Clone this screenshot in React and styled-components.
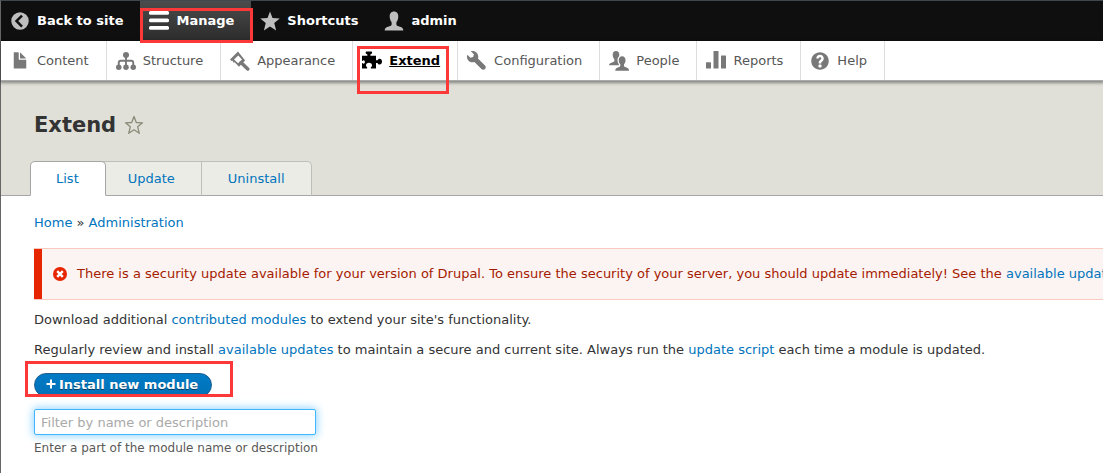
import React from 'react';
import styled, { createGlobalStyle, css } from 'styled-components';

const GlobalStyle = createGlobalStyle`
  * {
    box-sizing: border-box;
  }

  body {
    margin: 0;
    background: #fff;
    color: #333;
    font-family: 'DejaVu Sans', 'Lucida Grande', sans-serif;
    font-size: 13px;
    line-height: 20px;
    overflow: hidden;
  }
`;

const StyledPage = styled.div`
  min-height: 100vh;
  border-top: 1px solid #40474d;
  border-left: 1px solid #666;
`;

const StyledBar = styled.nav`
  display: flex;
  height: 40px;
  background: #0f0f0f;
`;

const StyledTray = styled.nav`
  position: relative;
  display: flex;
  height: 40px;
  background: #fff;
  border-bottom: 1px solid #aaa;
  box-shadow: 0 1px 3px 1px rgba(0, 0, 0, 0.4);
`;

const StyledItem = styled.div`
  position: relative;
  display: flex;
`;

const StyledTrayItem = styled(StyledItem)`
  border-right: 1px solid #ddd;
`;

const StyledBarLink = styled.a`
  display: flex;
  align-items: center;
  gap: 7px;
  padding: 0 17px 0 9px;
  color: #fff;
  font-weight: bold;
  text-decoration: none;
  white-space: nowrap;

  svg {
    color: ${({ $active }) => ($active ? '#fff' : '#bebebe')};
  }

  ${({ $active }) =>
    $active &&
    css`
      background: linear-gradient(#4c4c4c, #2b2b2b);
    `}
`;

const StyledTrayLink = styled.a`
  display: flex;
  align-items: center;
  gap: 7px;
  padding: 0 17px 0 9px;
  color: ${({ $active }) => ($active ? '#000' : '#565656')};
  font-weight: ${({ $active }) => ($active ? 'bold' : 'normal')};
  text-decoration: none;
  white-space: nowrap;

  svg {
    color: ${({ $active }) => ($active ? '#000' : '#787878')};
  }

  span {
    text-decoration: ${({ $active }) => ($active ? 'underline' : 'none')};
  }
`;

const StyledIcon = styled.svg`
  flex: none;
  width: 20px;
  height: 20px;
  fill: currentColor;
`;

const StyledMark = styled.div`
  position: absolute;
  z-index: 2;
  top: ${({ $top }) => $top}px;
  right: ${({ $right }) => $right}px;
  bottom: ${({ $bottom }) => $bottom}px;
  left: ${({ $left }) => $left}px;
  border: 3px solid #fd3838;
  pointer-events: none;
`;

const StyledHeader = styled.header`
  display: flex;
  flex-direction: column;
  padding: 28px 29px 0;
  background: #e0e0d8;
  border-bottom: 1px solid #a6a6a6;
`;

const StyledTitleRow = styled.div`
  display: flex;
  align-items: center;
  gap: 8px;
  padding: 0 4px;
`;

const StyledTitle = styled.h1`
  margin: 0;
  font-size: 21px;
  line-height: 32px;
`;

const StyledStarButton = styled.button`
  display: flex;
  padding: 0;
  border: 0;
  background: none;
  color: #8b8b78;
`;

const StyledTabs = styled.nav`
  display: flex;
  margin-top: 20px;
  margin-bottom: -1px;
`;

const StyledTab = styled.a`
  padding: 7px 26px 6px;
  border: 1px solid #bfbfba;
  border-left: 0;
  border-bottom-color: #a6a6a6;
  background: #ecece6;
  color: #0074bd;
  text-decoration: none;

  &:last-child {
    border-top-right-radius: 5px;
  }

  ${({ $active }) =>
    $active &&
    css`
      z-index: 1;
      margin-right: -4px;
      padding-left: 25px;
      border: 1px solid #a6a6a6;
      border-bottom-color: #fff;
      border-radius: 5px 5px 0 0;
      background: #fff;
    `}
`;

const StyledMain = styled.main`
  padding: 17px 0 0 33px;
`;

const StyledLink = styled.a`
  color: #0074bd;
  text-decoration: none;
`;

const StyledAlert = styled.div`
  display: flex;
  align-items: center;
  gap: 9px;
  height: 52px;
  margin-top: 15px;
  padding-left: 10px;
  border: solid #f9c9bf;
  border-width: 1px 0;
  background: #fcf4f2;
  box-shadow: inset 8px 0 #e62600;
  padding-left: 18px;
  color: #a51b00;
  white-space: nowrap;
  overflow: hidden;
`;

const StyledAlertIcon = styled.svg`
  flex: none;
  width: 16px;
  height: 16px;
`;

const StyledText = styled.p`
  margin: 10px 0 0;
`;

const StyledAction = styled.div`
  position: relative;
  width: fit-content;
  margin-top: 13px;
`;

const StyledInstall = styled.button`
  display: flex;
  align-items: center;
  gap: 3px;
  height: 24px;
  padding: 0 13px 2px 11px;
  border: 1px solid #1e5c90;
  border-radius: 20px;
  background: linear-gradient(#007bc6, #0071b8);
  color: #fff;
  font: bold 13px 'DejaVu Sans', sans-serif;
  text-shadow: 0 1px rgba(0, 0, 0, 0.5);
`;

const StyledPlus = styled.svg`
  width: 10px;
  height: 10px;
`;

const StyledField = styled.div`
  display: flex;
  flex-direction: column;
  align-items: flex-start;
  margin-top: 12px;
`;

const StyledInput = styled.input`
  width: 282px;
  max-width: 100%;
  height: 26px;
  padding: 0 6px;
  border: 1px solid #40b6ff;
  border-radius: 2px;
  outline: 0;
  background: #fff;
  box-shadow: 0 0 8px 1px #8fd3ff;
  color: #333;
  font: 13px 'DejaVu Sans', sans-serif;

  &::placeholder {
    color: #a9a9a9;
    opacity: 1;
  }
`;

const StyledHelp = styled.label`
  margin-top: 3px;
  color: #595959;
  font-size: 12px;
`;

const icons = {
  back: (
    <path
      fillRule="evenodd"
      d="M8 1a7 7 0 1 0 0 14A7 7 0 0 0 8 1zm2.3 3.3L6.6 8l3.7 3.7-1.4 1.4L3.8 8l5.1-5.1z"
    />
  ),
  menu: (
    <>
      <rect width="16" height="3" rx="1.2" />
      <rect y="6" width="16" height="3" rx="1.2" />
      <rect y="12" width="16" height="3" rx="1.2" />
    </>
  ),
  star: <path d="M8 .3l2 5.2 5.8.4-4.4 3.7 1.5 5.9L8 12.3l-4.9 3.2 1.5-5.9L.2 5.9 6 5.5z" />,
  user: (
    <path d="M4.6 5C4.3 2.1 5.8.4 8 .4s3.7 1.7 3.4 4.6c-.1 1.6-.7 3.1-1.5 4v1.6c0 1 .7 1.4 2.2 1.8 2 .5 3.2 1.2 3.4 3.1H.5c.2-1.9 1.4-2.6 3.4-3.1 1.5-.4 2.2-.8 2.2-1.8V9C5.3 8.1 4.7 6.6 4.6 5z" />
  ),
  file: (
    <path d="M12.502 7h-5c-.276 0-.502-.225-.502-.5v-5c0-.275-.225-.5-.5-.5h-3c-.275 0-.5.225-.5.5v12.029c0 .275.225.5.5.5h9.002c.275 0 .5-.225.5-.5v-6.029c0-.275-.225-.5-.5-.5zM8.502 6h4c.275 0 .34-.159.146-.354l-4.293-4.292c-.195-.195-.353-.129-.353.146v4c0 .275.225.5.5.5z" />
  ),
  structure: (
    <>
      <circle cx="8" cy="3.2" r="2.4" />
      <circle cx="2.2" cy="13" r="2.2" />
      <circle cx="8" cy="13" r="2.2" />
      <circle cx="13.8" cy="13" r="2.2" />
      <path
        d="M8 4v9M2.2 12.5V9.4Q2.2 7.8 3.8 7.8h8.4Q13.8 7.8 13.8 9.4v3.1"
        fill="none"
        stroke="currentColor"
        strokeWidth="1.5"
      />
    </>
  ),
  brush: (
    <>
      <path
        fillRule="evenodd"
        d="M6.4.3L0 6.7l1.2 1.2 1-.2.3 1.4 1.2-.2 3.5 3.6 4.9-4.9zM6.6 3.6l3 3.1-3.2 3.1-3.2-3.1z"
      />
      <path d="M9 9.4l5.2 5" fill="none" stroke="currentColor" strokeWidth="2.8" strokeLinecap="round" />
    </>
  ),
  puzzle: (
    <path d="M0 3.7h4.3V2.8C3.5 2.4 2.9 2 2.9 1.2c0-.6.4-.9 1-.9h3.2c.6 0 1 .3 1 .9 0 .8-.6 1.2-1.4 1.6v.9h4.5v3.7h1.2c.4-.8.9-1.3 1.7-1.3 1.1 0 1.9.9 1.9 2.3s-.8 2.4-1.9 2.4c-.8 0-1.3-.5-1.7-1.3h-1.2v4.4H7.1v-1c.6-.4.9-.9.9-1.6 0-1.1-.9-1.9-2.4-1.9s-2.4.8-2.4 1.9c0 .7.3 1.2.9 1.6v1H0V9.6h.4c.2.3.5.5.9.5.6 0 1-.6 1-1.3s-.4-1.4-1-1.4c-.4 0-.7.2-.9.5H0z" />
  ),
  wrench: (
    <path d="M14.416 11.586l-.01-.008v-.001l-5.656-5.656c.15-.449.252-.921.252-1.421 0-2.485-2.016-4.5-4.502-4.5-.505 0-.981.102-1.434.255l2.431 2.431-.588 2.196-2.196.588-2.445-2.445c-.162.464-.268.956-.268 1.475 0 2.486 2.014 4.5 4.5 4.5.5 0 .972-.102 1.421-.251l5.667 5.665c.781.781 2.047.781 2.828 0s.781-2.047 0-2.828z" />
  ),
  people: (
    <>
      <path d="M3 3.2C2.8 1.2 4 0 5.6 0s2.8 1.2 2.6 3.2c0 .4-.1.8-.2 1.1-.9.7-1.3 1.9-1.2 3.3.1 1.2.5 2.3 1.1 3l-.1.8H0c.1-1.3 1-2 2.4-2.3 1.5-.3 1.9-.5 1.9-1.3V6.600C3.5 5.8 3 4.5 3 3.2z" />
      <path d="M7.8 7.5C7.6 5.5 8.8 4.2 10.5 4.2s2.9 1.3 2.7 3.3c0 1.2-.5 2.4-1.2 3.1v1.2c0 .8.5 1 1.9 1.3 1.3.3 2.1 1 2.1 2.7H5c0-1.7.8-2.4 2.1-2.7 1.4-.3 1.9-.5 1.9-1.3v-1.2c-.7-.7-1.2-1.9-1.2-3.1z" />
    </>
  ),
  chart: (
    <>
      <rect y="9" width="4" height="5" rx=".4" />
      <rect x="6" width="4" height="14" rx=".4" />
      <rect x="12" y="3.5" width="4" height="10.5" rx=".4" />
    </>
  ),
  help: (
    <path d="M8.002 1c-3.868 0-7.002 3.134-7.002 7s3.134 7 7.002 7c3.865 0 7-3.134 7-7s-3.135-7-7-7zm3 5c0 .551-.16 1.085-.477 1.586l-.158.22c-.07.093-.189.241-.361.393-.168.148-.35.299-.545.447l-.203.189-.141.129-.096.17-.021.235v.63h-2.001v-.704c.026-.396.078-.73.204-.999.125-.269.271-.498.439-.688l.225-.21-.01-.015.176-.14.137-.128c.186-.139.357-.277.516-.417l.148-.18c.098-.152.168-.323.168-.518 0-.552-.447-1-1-1s-1.002.448-1.002 1h-2c0-1.657 1.343-3 3.002-3 1.656 0 3 1.343 3 3zm-1.75 6.619c0 .344-.281.625-.625.625h-1.25c-.345 0-.626-.281-.626-.625v-1.238c0-.344.281-.625.626-.625h1.25c.344 0 .625.281.625.625v1.238z" />
  ),
};

const Icon = ({ name }) => (
  <StyledIcon viewBox="0 0 16 16" aria-hidden="true">
    {icons[name]}
  </StyledIcon>
);

const barItems = [
  { label: 'Back to site', icon: 'back' },
  { label: 'Manage', icon: 'menu', active: true },
  { label: 'Shortcuts', icon: 'star' },
  { label: 'admin', icon: 'user' },
];

const trayItems = [
  { label: 'Content', icon: 'file' },
  { label: 'Structure', icon: 'structure' },
  { label: 'Appearance', icon: 'brush' },
  { label: 'Extend', icon: 'puzzle', active: true },
  { label: 'Configuration', icon: 'wrench' },
  { label: 'People', icon: 'people' },
  { label: 'Reports', icon: 'chart' },
  { label: 'Help', icon: 'help' },
];

const App = () => (
  <>
    <GlobalStyle />
    <StyledPage>
      <StyledBar aria-label="Toolbar">
        {barItems.map(({ label, icon, active }) => (
          <StyledItem key={label}>
            <StyledBarLink href="#" $active={active}>
              <Icon name={icon} />
              {label}
            </StyledBarLink>
            {active && <StyledMark $top={7} $right={-2} $bottom={-2} $left={0} />}
          </StyledItem>
        ))}
      </StyledBar>
      <StyledTray aria-label="Administration menu">
        {trayItems.map(({ label, icon, active }) => (
          <StyledTrayItem key={label}>
            <StyledTrayLink href="#" $active={active}>
              <Icon name={icon} />
              <span>{label}</span>
            </StyledTrayLink>
            {active && <StyledMark $top={5} $right={8} $bottom={-14} $left={4} />}
          </StyledTrayItem>
        ))}
      </StyledTray>
      <StyledHeader>
        <StyledTitleRow>
          <StyledTitle>Extend</StyledTitle>
          <StyledStarButton type="button" aria-label="Add to shortcuts">
            <StyledIcon viewBox="0 0 20 20">
              <path
                d="M10 1.500l2.300 6 6.200.3-4.800 4 1.600 6.500L10 14.800l-5.300 3.500 1.600-6.500-4.800-4 6.200-.3z"
                fill="none"
                stroke="currentColor"
                strokeWidth="1.3"
                strokeLinejoin="round"
              />
            </StyledIcon>
          </StyledStarButton>
        </StyledTitleRow>
        <StyledTabs aria-label="Tabs">
          <StyledTab href="#" $active>
            List
          </StyledTab>
          <StyledTab href="#">Update</StyledTab>
          <StyledTab href="#">Uninstall</StyledTab>
        </StyledTabs>
      </StyledHeader>
      <StyledMain>
        <nav aria-label="Breadcrumb">
          <StyledLink href="#">Home</StyledLink> » <StyledLink href="#">Administration</StyledLink>
        </nav>
        <StyledAlert role="alert">
          <StyledAlertIcon viewBox="0 0 16 16" aria-hidden="true">
            <circle cx="8" cy="8" r="7" fill="#e62600" />
            <path d="M5.200 5.200l5.600 5.600M10.800 5.200l-5.600 5.600" stroke="#fff" strokeWidth="2.400" />
          </StyledAlertIcon>
          <span>
            There is a security update available for your version of Drupal. To ensure the security of your
            server, you should update immediately! See the <StyledLink href="#">available updates</StyledLink>
          </span>
        </StyledAlert>
        <StyledText>
          Download additional <StyledLink href="#">contributed modules</StyledLink> to extend your site's
          functionality.
        </StyledText>
        <StyledText>
          Regularly review and install <StyledLink href="#">available updates</StyledLink> to maintain a secure
          and current site. Always run the <StyledLink href="#">update script</StyledLink> each time a module is
          updated.
        </StyledText>
        <StyledAction>
          <StyledInstall type="button">
            <StyledPlus viewBox="0 0 10 10" aria-hidden="true">
              <path d="M5 .5v9M.5 5h9" stroke="#fff" strokeWidth="2" />
            </StyledPlus>
            Install new module
          </StyledInstall>
          <StyledMark $top={-12} $right={-21} $bottom={0} $left={-9} />
        </StyledAction>
        <StyledField>
          <StyledInput id="module-filter" type="search" placeholder="Filter by name or description" />
          <StyledHelp htmlFor="module-filter">Enter a part of the module name or description</StyledHelp>
        </StyledField>
      </StyledMain>
    </StyledPage>
  </>
);

export default App;
